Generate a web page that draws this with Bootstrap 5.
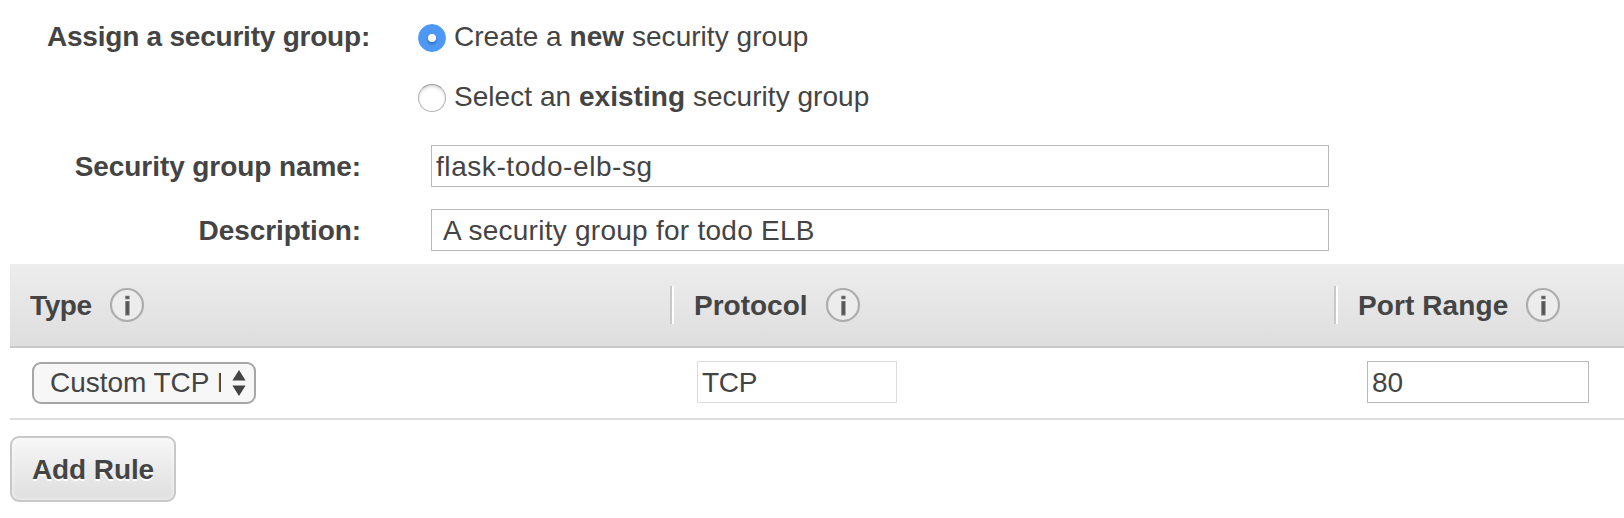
<!DOCTYPE html>
<html lang="en">
<head>
<meta charset="utf-8">
<meta name="viewport" content="width=device-width, initial-scale=1">
<title>Assign a security group</title>
<link rel="stylesheet" href="https://cdn.jsdelivr.net/npm/bootstrap@5.3.0/dist/css/bootstrap.min.css">
<style>
body{font-family:"Liberation Sans",Arial,sans-serif;font-size:28px;line-height:32px;color:#444;background:#fff;overflow:hidden}
.sg-form{padding-top:8px}
.sg-line{height:60px;padding-bottom:4px}
.sg-line.field{height:64px;padding-bottom:0}
.sg-name{margin-top:6px}
.sg-label{width:370px;flex:none;text-align:right;font-weight:700;letter-spacing:-.22px;padding-top:2px}
.field .sg-label{width:361px;letter-spacing:-.08px}
.sg-choice{margin-left:48px}
.sg-choice span{padding-top:2px;letter-spacing:.04px}
.form-check-input.sg-radio{width:28px;height:28px;margin:3px 8px 0 0;border:1px solid #b4b4b4;border-top-color:#999;background:#fff;box-shadow:inset 0 2px 3px #ddd;flex:none}
.form-check-input.sg-radio:checked{border-color:#4d97f5;background:radial-gradient(circle at 50% 50%,#fff 0 3.7px,rgba(255,255,255,0) 4.5px),radial-gradient(circle at 50% 58%,#3478d2 0 3px,#4d97f5 6px);box-shadow:none}
.form-control.sg-input{height:42px;padding:2px 4px 0;border:1px solid #b9b9b9;border-radius:0;font-size:28px;line-height:38px;color:#444;background:#fff}
.sg-wide{width:898px;margin-left:70px}
#group-name{letter-spacing:.57px}
.form-control#group-desc{padding-left:11px;letter-spacing:.26px}
.rules{margin:2px 0 0 10px}
.rules-head{height:84px;background:linear-gradient(#ededed,#dedede);border-bottom:2px solid #c8c8c8;font-weight:700}
.rules-row{height:72px;border-bottom:2px solid #ddd}
.rule-col{width:664px;flex:none;padding-left:20px}
.rule-col:last-child{width:286px}
.rules-head .rule-col:not(:last-child){background:linear-gradient(90deg,#c8c8c8 50%,#fff 50%) right center/4px 38px no-repeat}
.rules-head span{padding-top:2px}
.rules-head svg{width:36px;height:36px;flex:none;margin-top:-1px}
.w-type{width:79px;letter-spacing:-.4px}
.w-proto{width:131px}
.w-port{width:167px;letter-spacing:.1px}
.rules-row .rule-type{padding:14px 0 0 22px}
.rules-row .rule-proto{padding:13px 0 0 23px}
.rules-row .rule-port{padding:13px 0 0 29px}
.rule-proto .form-control.sg-input{width:200px;border-color:#ddd;letter-spacing:-.3px}
.rule-port .form-control.sg-input{width:222px}
.sg-select{width:224px;height:42px;padding:0 8px 0 16px;border:2px solid #a6a6a6;border-radius:9px;background:#f7f7f7;color:#444}
.sg-select .txt{width:171px;overflow:hidden;white-space:nowrap;flex:none;letter-spacing:-.03px}
.btn.add-rule{margin:16px 0 0 10px;width:166px;height:66px;padding:2px 0 0;border:2px solid #c8c8c8;border-radius:9px;font-size:28px;line-height:32px;font-weight:700;letter-spacing:-.1px;color:#444;background:linear-gradient(#f7f7f7,#dedede);box-shadow:inset 0 0 3px 2px rgba(255,255,255,.35);text-shadow:0 2px 0 #fff}
</style>
</head>
<body>
<svg class="d-none" xmlns="http://www.w3.org/2000/svg">
  <symbol id="info" viewBox="0 0 36 36">
    <circle cx="18" cy="18" r="16" fill="#ececec" stroke="#adadad" stroke-width="2.2"/>
    <path d="M16.2 8.8h4.4v3.4h-4.4zM16.2 14h4.4v14.4h-4.4z" fill="#777"/>
    <path d="M17.2 9.5h2.6v2h-2.6zM17.2 14.8h2.6v12.8h-2.6z" fill="#555"/>
  </symbol>
</svg>
<form class="sg-form">
  <div class="sg-line d-flex align-items-center">
    <div class="sg-label">Assign a security group:</div>
    <label class="sg-choice d-flex align-items-center"><input class="form-check-input sg-radio" type="radio" name="mode" checked><span>Create a <b>new</b> security group</span></label>
  </div>
  <div class="sg-line d-flex align-items-center">
    <div class="sg-label"></div>
    <label class="sg-choice d-flex align-items-center"><input class="form-check-input sg-radio" type="radio" name="mode"><span>Select an <b>existing</b> security group</span></label>
  </div>
  <div class="sg-line field sg-name d-flex align-items-center">
    <label class="sg-label" for="group-name">Security group name:</label>
    <input id="group-name" class="form-control sg-input sg-wide" type="text" value="flask-todo-elb-sg">
  </div>
  <div class="sg-line field d-flex align-items-center">
    <label class="sg-label" for="group-desc">Description:</label>
    <input id="group-desc" class="form-control sg-input sg-wide" type="text" value="A security group for todo ELB">
  </div>
  <div class="rules">
    <div class="rules-head d-flex">
      <div class="rule-col d-flex align-items-center"><span class="w-type">Type</span><svg><use href="#info"/></svg></div>
      <div class="rule-col d-flex align-items-center"><span class="w-proto">Protocol</span><svg><use href="#info"/></svg></div>
      <div class="rule-col d-flex align-items-center"><span class="w-port">Port Range</span><svg><use href="#info"/></svg></div>
    </div>
    <div class="rules-row d-flex align-items-start">
      <div class="rule-col rule-type">
        <div class="sg-select d-flex align-items-center justify-content-between" role="button">
          <span class="txt">Custom TCP Rule</span>
          <svg width="14" height="26" viewBox="0 0 14 26" fill="#444"><path d="M7 0l6.6 10.5H.4zM7 26L.4 15.5h13.2z"/></svg>
        </div>
      </div>
      <div class="rule-col rule-proto"><input class="form-control sg-input" type="text" value="TCP" aria-label="Protocol" readonly></div>
      <div class="rule-col rule-port"><input class="form-control sg-input" type="text" value="80" aria-label="Port range"></div>
    </div>
  </div>
  <button class="btn add-rule" type="button">Add Rule</button>
</form>
<script src="https://cdn.jsdelivr.net/npm/bootstrap@5.3.0/dist/js/bootstrap.bundle.min.js"></script>
</body>
</html>
